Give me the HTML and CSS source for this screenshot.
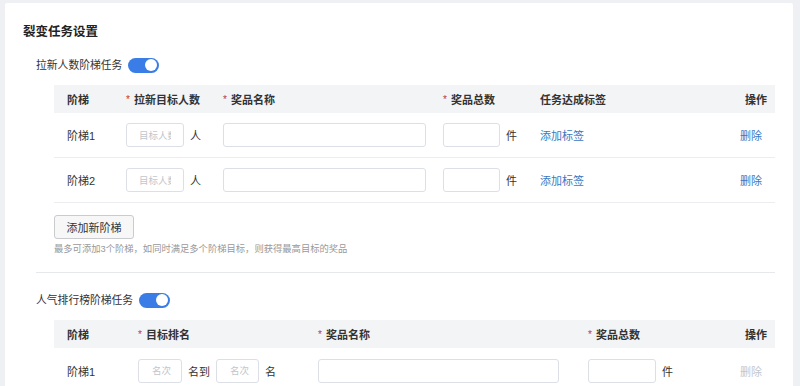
FILE: index.html
```html
<!DOCTYPE html>
<html lang="zh-CN">
<head>
<meta charset="utf-8">
<link rel="stylesheet" href="styles.css">
</head>
<body>
<div class="card">
  <div class="title">裂变任务设置</div>

  <div class="section">
    <div class="sec-head">
      <span class="sec-label">拉新人数阶梯任务</span>
      <span class="switch"><span class="knob"></span></span>
    </div>
    <div class="table t1">
      <div class="row head">
        <div class="cell">阶梯</div>
        <div class="cell"><span class="req">*</span>拉新目标人数</div>
        <div class="cell"><span class="req">*</span>奖品名称</div>
        <div class="cell"><span class="req">*</span>奖品总数</div>
        <div class="cell">任务达成标签</div>
        <div class="cell op">操作</div>
      </div>
      <div class="row body">
        <div class="cell">阶梯1</div>
        <div class="cell"><input class="inp w58" placeholder="目标人数"><span class="unit">人</span></div>
        <div class="cell"><input class="inp w203"></div>
        <div class="cell"><input class="inp w57"><span class="unit">件</span></div>
        <div class="cell"><a class="link">添加标签</a></div>
        <div class="cell opc"><a class="link">删除</a></div>
      </div>
      <div class="row body">
        <div class="cell">阶梯2</div>
        <div class="cell"><input class="inp w58" placeholder="目标人数"><span class="unit">人</span></div>
        <div class="cell"><input class="inp w203"></div>
        <div class="cell"><input class="inp w57"><span class="unit">件</span></div>
        <div class="cell"><a class="link">添加标签</a></div>
        <div class="cell opc"><a class="link">删除</a></div>
      </div>
    </div>
    <div class="actions">
      <button class="btn">添加新阶梯</button>
      <div class="hint">最多可添加3个阶梯，如同时满足多个阶梯目标，则获得最高目标的奖品</div>
    </div>
  </div>

  <div class="divider"></div>

  <div class="section">
    <div class="sec-head s2">
      <span class="sec-label">人气排行榜阶梯任务</span>
      <span class="switch"><span class="knob"></span></span>
    </div>
    <div class="table t2">
      <div class="row head">
        <div class="cell">阶梯</div>
        <div class="cell"><span class="req">*</span>目标排名</div>
        <div class="cell"><span class="req">*</span>奖品名称</div>
        <div class="cell"><span class="req">*</span>奖品总数</div>
        <div class="cell op">操作</div>
      </div>
      <div class="row body">
        <div class="cell">阶梯1</div>
        <div class="cell"><input class="inp w44" placeholder="名次"><span class="unit">名到</span><input class="inp w43" placeholder="名次"><span class="unit">名</span></div>
        <div class="cell"><input class="inp w241"></div>
        <div class="cell"><input class="inp w68"><span class="unit">件</span></div>
        <div class="cell opc"><a class="link disabled">删除</a></div>
      </div>
    </div>
  </div>
</div>
</body>
</html>
```

FILE: styles.css
```css
* { box-sizing: border-box; }
html, body { margin: 0; padding: 0; }
body {
  background: #eff0f3;
  font-family: "Liberation Sans", "Noto Sans CJK SC", sans-serif;
  color: #333;
  height: 386px;
  overflow: hidden;
}
.card {
  margin: 3px 7px 0 5px;
  background: #fff;
  padding: 18px 18px 40px 18px;
  border-radius: 2px;
}
.title {
  font-size: 12.5px;
  font-weight: 600;
  line-height: 22px;
  height: 22px;
  color: #222;
}
.section { margin-left: 13px; }
.sec-head {
  display: flex;
  align-items: center;
  height: 16px;
  margin-top: 14px;
}
.sec-head.s2 { margin-top: 19px; }
.sec-label { font-size: 10.8px; line-height: 16px; color: #333; }
.switch {
  position: relative;
  width: 31px;
  height: 15px;
  border-radius: 8px;
  background: #3a7de6;
  margin-left: 6px;
}
.knob {
  position: absolute;
  right: 2px;
  top: 1.5px;
  width: 12px;
  height: 12px;
  border-radius: 50%;
  background: #fff;
}
.table { margin-left: 18px; margin-top: 12px; }
.t2 { margin-top: 12px; }
.row { display: grid; align-items: center; }
.t1 .row { grid-template-columns: 59px 97px 220px 97px 213px 35px; }
.t2 .row { grid-template-columns: 71px 180px 270px 165px 35px; }
.row.head {
  height: 28px;
  background: #f3f4f6;
  font-weight: 600;
  font-size: 11px;
  color: #333;
}
.row.body {
  height: 45px;
  border-bottom: 1px solid #ebedf0;
  font-size: 11px;
}
.t2 .row.body { border-bottom: none; }
.cell {
  padding-left: 13px;
  display: flex;
  align-items: center;
  white-space: nowrap;
}
.cell.op { padding-left: 0; justify-content: flex-end; padding-right: 8px; }
.cell.opc { padding-left: 0; }
.req { color: #c0392b; margin-right: 4px; font-weight: 400; font-size: 10px; }
.inp {
  height: 24px;
  border: 1px solid #dcdfe6;
  border-radius: 3px;
  background: #fff;
  padding: 0 12px;
  font-size: 9.5px;
  font-family: "Liberation Sans", "Noto Sans CJK SC", sans-serif;
  outline: none;
}
.inp::placeholder { color: #c2c5cb; }
.w58 { width: 58px; }
.w203 { width: 203px; }
.w57 { width: 57px; }
.w44 { width: 44px; padding: 0 4px 0 13px; }
.w43 { width: 43px; padding: 0 4px 0 13px; }
.w241 { width: 241px; }
.w68 { width: 68px; }
.unit { margin-left: 6px; margin-right: 6px; font-size: 11px; color: #333; }
.link { color: #3a78c2; font-size: 11px; cursor: pointer; }
.link.disabled { color: #c4c7cd; }
.actions { margin-left: 18px; padding-top: 12px; }
.btn {
  display: block;
  width: 80px;
  height: 24px;
  border: 1px solid #c9cbcf;
  border-radius: 3px;
  background: #f7f7f8;
  font-size: 11px;
  color: #333;
  font-family: "Liberation Sans", "Noto Sans CJK SC", sans-serif;
  padding: 0;
}
.hint {
  margin-top: 4px;
  font-size: 9.3px;
  line-height: 12px;
  color: #999;
}
.divider {
  margin-left: 13px;
  margin-top: 17px;
  height: 1px;
  background: #e6e8eb;
}
```
